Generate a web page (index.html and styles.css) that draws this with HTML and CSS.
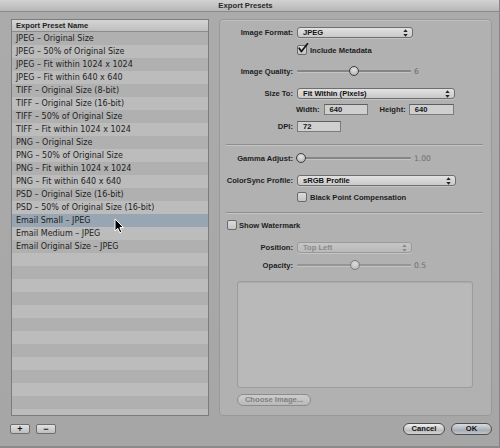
FILE: index.html
```html
<!DOCTYPE html>
<html>
<head>
<meta charset="utf-8">
<title>Export Presets</title>
<link rel="stylesheet" href="styles.css">
</head>
<body>
<div class="window">
  <div class="titlebar">Export Presets</div>
  <div class="main">
    <div class="list">
      <div class="list-header">Export Preset Name</div>
      <div class="list-body">
        <div class="row">JPEG – Original Size</div>
        <div class="row">JPEG – 50% of Original Size</div>
        <div class="row">JPEG – Fit within 1024 x 1024</div>
        <div class="row">JPEG – Fit within 640 x 640</div>
        <div class="row">TIFF – Original Size (8-bit)</div>
        <div class="row">TIFF – Original Size (16-bit)</div>
        <div class="row">TIFF – 50% of Original Size</div>
        <div class="row">TIFF – Fit within 1024 x 1024</div>
        <div class="row">PNG – Original Size</div>
        <div class="row">PNG – 50% of Original Size</div>
        <div class="row">PNG – Fit within 1024 x 1024</div>
        <div class="row">PNG – Fit within 640 x 640</div>
        <div class="row">PSD – Original Size (16-bit)</div>
        <div class="row">PSD – 50% of Original Size (16-bit)</div>
        <div class="row selected">Email Small – JPEG</div>
        <div class="row">Email Medium – JPEG</div>
        <div class="row">Email Original Size – JPEG</div>
      </div>
      <svg class="cursor" width="12" height="16" viewBox="0 0 12 16"><path d="M1 1 L1 13 L3.8 10.3 L5.8 14.8 L7.8 13.9 L5.9 9.6 L9.6 9.6 Z" fill="#000" stroke="#fff" stroke-width="1" stroke-linejoin="round"/></svg>
    </div>

    <div class="panel">
      <div class="frow h11 m7">
        <span class="label">Image Format:</span>
        <div class="popup w116"><span>JPEG</span><svg class="arr" width="5" height="8" viewBox="0 0 5 8"><polygon points="0.3,3 2.5,0.3 4.7,3" fill="#222"/><polygon points="0.3,5 2.5,7.7 4.7,5" fill="#222"/></svg></div>
      </div>
      <div class="frow h10 m7 indent">
        <span class="check"><svg width="12" height="12" viewBox="0 0 12 12"><path d="M2.2 5.2 L4.4 8.6 L10.5 0.8" fill="none" stroke="#111" stroke-width="1.7" stroke-linecap="round" stroke-linejoin="round"/></svg></span>
        <span class="ctext">Include Metadata</span>
      </div>
      <div class="frow h10 m11">
        <span class="label">Image Quality:</span>
        <div class="slider"><div class="track"></div><div class="knob" style="left: 52px"></div></div>
        <span class="val">6</span>
      </div>
      <div class="frow h11 m12">
        <span class="label">Size To:</span>
        <div class="popup w158"><span>Fit Within (Pixels)</span><svg class="arr" width="5" height="8" viewBox="0 0 5 8"><polygon points="0.3,3 2.5,0.3 4.7,3" fill="#222"/><polygon points="0.3,5 2.5,7.7 4.7,5" fill="#222"/></svg></div>
      </div>
      <div class="frow h11 m5 indent-w">
        <span class="slabel">Width:</span>
        <div class="field w44">640</div>
        <span class="slabel hgt">Height:</span>
        <div class="field w45">640</div>
      </div>
      <div class="frow h11 m6">
        <span class="label">DPI:</span>
        <div class="field w44">72</div>
      </div>
      <div class="sep m12"></div>
      <div class="frow h10 m8">
        <span class="label">Gamma Adjust:</span>
        <div class="slider"><div class="track"></div><div class="knob" style="left: -1px"></div></div>
        <span class="val">1.00</span>
      </div>
      <div class="frow h11 m12">
        <span class="label">ColorSync Profile:</span>
        <div class="popup w159"><span>sRGB Profile</span><svg class="arr" width="5" height="8" viewBox="0 0 5 8"><polygon points="0.3,3 2.5,0.3 4.7,3" fill="#222"/><polygon points="0.3,5 2.5,7.7 4.7,5" fill="#222"/></svg></div>
      </div>
      <div class="frow h10 m6 indent">
        <span class="check"></span>
        <span class="ctext">Black Point Compensation</span>
      </div>
      <div class="sep m10"></div>
      <div class="frow h10 m7 wm">
        <span class="check"></span>
        <span class="ctext wmtext">Show Watermark</span>
      </div>
      <div class="frow h11 m12">
        <span class="label">Position:</span>
        <div class="popup w115 disabled"><span>Top Left</span><svg class="arr" width="5" height="8" viewBox="0 0 5 8"><polygon points="0.3,3 2.5,0.3 4.7,3" fill="#8a8a8a"/><polygon points="0.3,5 2.5,7.7 4.7,5" fill="#8a8a8a"/></svg></div>
      </div>
      <div class="frow h10 m7">
        <span class="label">Opacity:</span>
        <div class="slider dim"><div class="track"></div><div class="knob" style="left: 53px"></div></div>
        <span class="val">0.5</span>
      </div>
      <div class="well"></div>
      <div class="choose">Choose Image...</div>
    </div>
  </div>
  <div class="footer">
    <div class="sq">+</div>
    <div class="sq">−</div>
    <div class="spacer"></div>
    <div class="btn">Cancel</div>
    <div class="btn ok">OK</div>
  </div>
</div>
</body>
</html>
```

FILE: styles.css
```css
* { box-sizing: border-box; }
html, body { margin: 0; padding: 0; }
body {
  width: 500px;
  height: 448px;
  overflow: hidden;
  background: #a7a7a7;
  font-family: "DejaVu Sans", "Liberation Sans", sans-serif;
  font-size: 8px;
  color: #1c1c1c;
}
.window {
  width: 500px;
  height: 448px;
  background: linear-gradient(#ababab, #a6a6a6);
  border-right: 1px solid #858585;
  border-bottom: 2px solid #8a8a8a;
  display: flex;
  flex-direction: column;
}
.titlebar {
  height: 12px;
  flex: none;
  background: linear-gradient(#d2d2d2, #b6b6b6);
  border-bottom: 1px solid #8a8a8a;
  text-align: center;
  font-family: "Liberation Sans", sans-serif;
  font-weight: bold;
  font-size: 7.7px;
  line-height: 11px;
  color: #2a2a2a;
  padding-right: 8px;
}
.main {
  display: flex;
  gap: 10px;
  padding: 7px 7px 0 11px;
  height: 404px;
  flex: none;
}
.list {
  position: relative;
  width: 198px;
  height: 397px;
  border: 1px solid #7c7c7c;
  display: flex;
  flex-direction: column;
  background: #b8b8b8;
}
.list-header {
  height: 12px;
  flex: none;
  background: linear-gradient(#d5d5d5, #bebebe);
  border-bottom: 1px solid #8c8c8c;
  font-family: "Liberation Sans", sans-serif;
  font-weight: bold;
  font-size: 7.6px;
  line-height: 11px;
  padding-left: 4px;
  color: #222;
}
.list-body {
  flex: 1;
  overflow: hidden;
  background: repeating-linear-gradient(to bottom, #b0b0b0 0, #b0b0b0 13px, #bcbcbc 13px, #bcbcbc 26px);
}
.row {
  height: 13px;
  line-height: 13px;
  padding-left: 4px;
  white-space: nowrap;
  color: #1e1e1e;
}
.row.selected { background: #98a6b4; }
.cursor {
  position: absolute;
  left: 102px;
  top: 198px;
}
.panel {
  width: 273px;
  height: 397px;
  border: 1px solid #999;
  border-radius: 4px;
  background: #b1b1b1;
  box-shadow: inset 0 1px 0 #c0c0c0;
  padding: 0 8px 0 6px;
  display: flex;
  flex-direction: column;
}
.frow { display: flex; align-items: center; flex: none; }
.h10 { height: 10px; }
.h11 { height: 11px; }
.m5 { margin-top: 5px; }
.m6 { margin-top: 6px; }
.m7 { margin-top: 7px; }
.m8 { margin-top: 8px; }
.m10 { margin-top: 10px; }
.m11 { margin-top: 11px; }
.m12 { margin-top: 12px; }
.label, .slabel, .ctext, .popup, .field, .btn, .choose, .sq {
  font-family: "Liberation Sans", sans-serif;
  font-weight: bold;
  font-size: 7.6px;
  white-space: nowrap;
}
.label {
  width: 67px;
  margin-right: 4px;
  text-align: right;
  flex: none;
  color: #1e1e1e;
}
.indent { padding-left: 71px; }
.indent-w { padding-left: 70px; }
.slabel { margin-right: 4px; color: #1e1e1e; }
.slabel.hgt { margin-left: 12px; margin-right: 3px; }
.popup {
  height: 11px;
  border: 1px solid #6e6e6e;
  border-radius: 3px;
  background: linear-gradient(#e2e2e2, #c9c9c9);
  display: flex;
  align-items: center;
  padding: 0 4px 0 5px;
  color: #111;
  box-shadow: 0 1px 0 rgba(255,255,255,0.25);
}
.popup .arr { margin-left: auto; }
.popup.disabled {
  border-color: #9a9a9a;
  background: linear-gradient(#c6c6c6, #bababa);
  color: #8a8a8a;
}
.w115 { width: 115px; }
.w116 { width: 116px; }
.w158 { width: 158px; }
.w159 { width: 159px; }
.w44 { width: 44px; }
.w45 { width: 45px; }
.field {
  height: 11px;
  border: 1px solid #7c7c7c;
  border-top-color: #5e5e5e;
  background: #cfcfcf;
  padding-left: 5px;
  line-height: 9px;
  color: #151515;
  font-weight: bold;
}
.check {
  position: relative;
  width: 10px;
  height: 10px;
  flex: none;
  border: 1px solid #6a6a6a;
  border-radius: 2px;
  background: linear-gradient(#dcdcdc, #c4c4c4);
}
.check svg { position: absolute; left: -1px; top: -3px; }
.ctext { margin-left: 3px; color: #1e1e1e; }
.wm { padding-left: 1px; }
.wmtext { margin-left: 2px; }
.slider {
  position: relative;
  width: 114px;
  height: 10px;
  flex: none;
}
.track {
  position: absolute;
  left: 0; right: 0;
  top: 4px;
  height: 2px;
  border-radius: 1px;
  background: #858585;
  box-shadow: 0 1px 0 #c4c4c4;
}
.knob {
  position: absolute;
  top: 0;
  width: 10px;
  height: 10px;
  border-radius: 50%;
  border: 1.5px solid #3e3e3e;
  background: radial-gradient(circle at 50% 35%, #e6e6e6, #a8a8a8);
}
.slider.dim .track { background: #959595; }
.slider.dim .knob { border-color: #7a7a7a; background: radial-gradient(circle at 50% 35%, #dcdcdc, #b4b4b4); }
.val {
  margin-left: 3px;
  color: #6c6c6c;
  font-size: 7.6px;
}
.sep {
  height: 1px;
  flex: none;
  background: #8e8e8e;
  box-shadow: 0 1px 0 #c3c3c3;
}
.well {
  margin-top: 11px;
  margin-left: 11px;
  width: 236px;
  height: 107px;
  flex: none;
  border: 1px solid #9c9c9c;
  border-radius: 3px;
  background: #b9b9b9;
  box-shadow: inset 0 1px 1px rgba(0,0,0,0.08);
}
.choose {
  margin-top: 6px;
  margin-left: 11px;
  width: 74px;
  height: 12px;
  flex: none;
  border: 1px solid #8c8c8c;
  border-radius: 6px;
  background: linear-gradient(#cdcdcd, #b9b9b9);
  color: #808080;
  text-align: center;
  line-height: 10px;
}
.footer {
  margin-top: 7px;
  height: 12px;
  flex: none;
  display: flex;
  align-items: center;
  padding: 0 7px 0 10px;
}
.sq {
  width: 20px;
  height: 10px;
  border: 1px solid #6e6e6e;
  border-radius: 2px;
  background: linear-gradient(#e2e2e2, #bdbdbd);
  text-align: center;
  line-height: 8px;
  font-size: 9px;
  color: #111;
  margin-right: 6px;
}
.spacer { flex: 1; }
.btn {
  width: 42px;
  height: 12px;
  border: 1px solid #4e4e4e;
  border-radius: 6px;
  background: linear-gradient(#f0f0f0, #c6c6c6 55%, #b6b6b6 56%, #d4d4d4);
  text-align: center;
  line-height: 10px;
  color: #111;
}
.btn.ok {
  margin-left: 6px;
  width: 41px;
  background: linear-gradient(#d8dce0, #aeb4ba 55%, #a0a7ae 56%, #c0c6cc);
}
```
